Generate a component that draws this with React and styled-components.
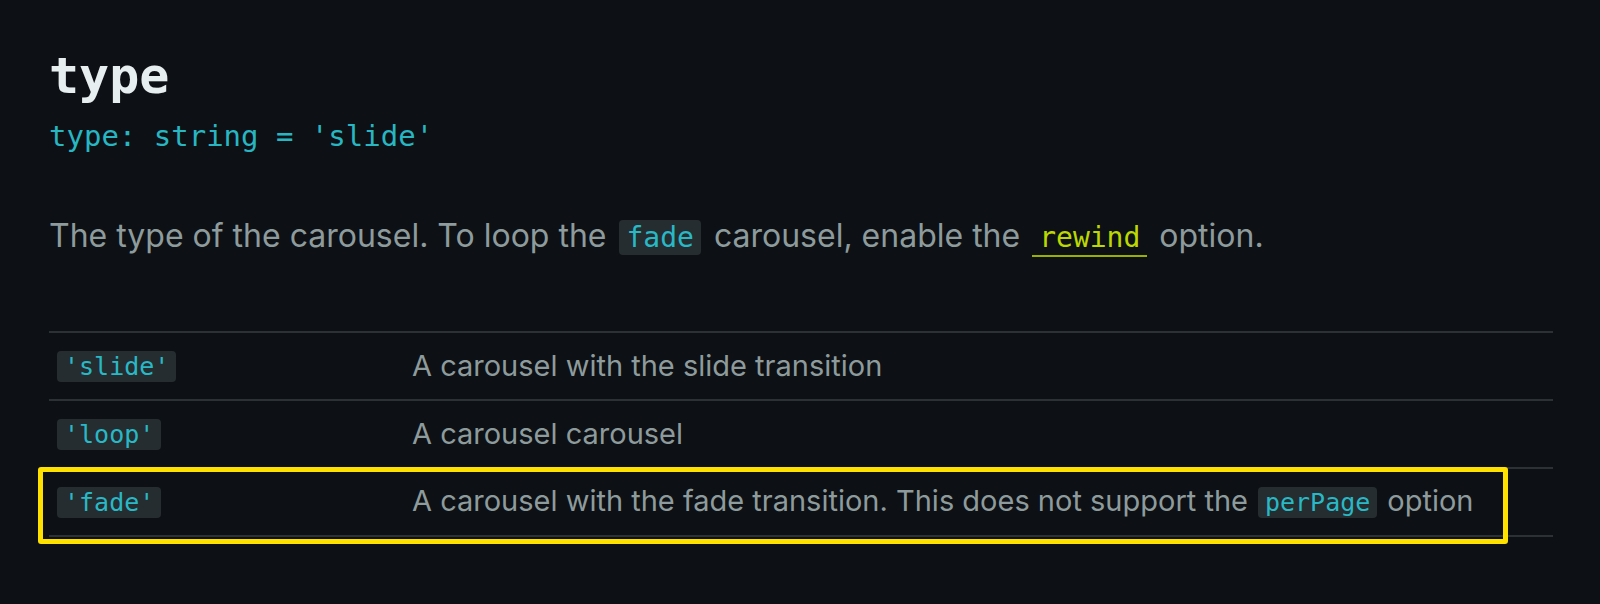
import React from "react";
import styled, { createGlobalStyle } from "styled-components";

const Global = createGlobalStyle`
  html, body { margin: 0; padding: 0; background: #0d1014; }
  body { font-family: Inter, "Noto Sans", sans-serif; }
`;

const Page = styled.main`
  box-sizing: border-box;
  width: 1600px;
  height: 604px;
  padding: 51px 47px 0 49px;
  background: #0d1014;
  overflow: hidden;
`;

const Title = styled.h3`
  margin: 0;
  font-family: "DejaVu Sans Mono", monospace;
  font-weight: 700;
  font-size: 50px;
  line-height: 50px;
  color: #e7eef0;
`;

const Signature = styled.div`
  margin-top: 18px;
  font-family: "DejaVu Sans Mono", monospace;
  font-size: 29px;
  line-height: 35px;
  color: #27b6c2;
`;

const Description = styled.p`
  margin: 58px 0 0;
  font-family: Inter, sans-serif;
  font-size: 32px;
  line-height: 48px;
  color: #8e9b9c;
`;

const Code = styled.code`
  font-family: "DejaVu Sans Mono", monospace;
  font-size: ${(p) => p.$size || 28}px;
  padding: 1px 7px;
  border-radius: 4px;
  background: #252d30;
  color: #29b8c5;
  margin: 0 ${(p) => (p.$gap === undefined ? 4 : p.$gap)}px;
`;

const LinkCode = styled.a`
  font-family: "DejaVu Sans Mono", monospace;
  font-size: 28px;
  padding: 1px 7px;
  margin: 0 3px;
  color: #bcd800;
  border-bottom: 2px solid #98b000;
  text-decoration: none;
`;

const Table = styled.div`
  margin-top: 69px;
  border-top: 2px solid #2b3134;
`;

const Row = styled.div`
  position: relative;
  display: grid;
  grid-template-columns: 355px 1fr;
  align-items: center;
  min-height: 66px;
  border-bottom: 2px solid #2b3134;
`;

const Cell = styled.div`
  padding: 0 8px;
  font-family: Inter, sans-serif;
  font-size: 29px;
  line-height: 40px;
  color: #8e9b9c;
`;

const Highlight = styled.div`
  position: absolute;
  top: -2px;
  left: -11px;
  right: 45px;
  bottom: -9px;
  border: 5px solid #ffe100;
  border-radius: 3px;
  pointer-events: none;
`;

const rows = [
  { value: "'slide'", desc: <>A carousel with the slide transition</> },
  { value: "'loop'", desc: <>A carousel carousel</> },
  {
    value: "'fade'",
    desc: (
      <>
        A carousel with the fade transition. This does not support the
        <Code $size={25} $gap={10}>perPage</Code>option
      </>
    ),
    highlight: true,
  },
];

export default function App() {
  return (
    <>
      <Global />
      <Page>
        <Title>type</Title>
        <Signature>type: string = 'slide'</Signature>
        <Description>
          The type of the carousel. To loop the <Code>fade</Code> carousel,
          enable the <LinkCode href="#rewind">rewind</LinkCode> option.
        </Description>
        <Table>
          {rows.map((r) => (
            <Row key={r.value}>
              <Cell>
                <Code $size={25} $gap={0}>{r.value}</Code>
              </Cell>
              <Cell>{r.desc}</Cell>
              {r.highlight && <Highlight />}
            </Row>
          ))}
        </Table>
      </Page>
    </>
  );
}
